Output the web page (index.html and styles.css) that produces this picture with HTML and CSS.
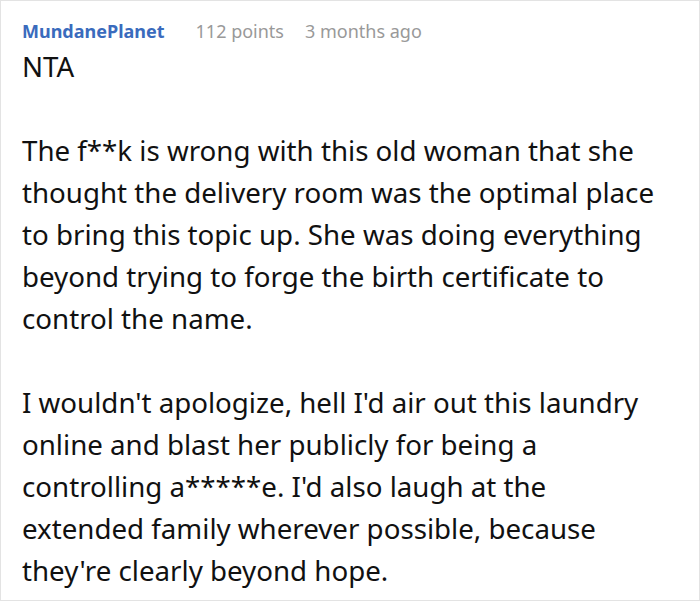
FILE: index.html
```html
<!DOCTYPE html>
<html>
<head>
<meta charset="utf-8">
<link rel="stylesheet" href="styles.css">
</head>
<body>
<div class="comment">
  <div class="meta">
    <span class="author">MundanePlanet</span>
    <span class="info">112 points</span>
    <span class="info">3 months ago</span>
  </div>
  <div class="text">NTA<br><br>The f**k is wrong with this old woman that she thought the delivery room was the optimal place to bring this topic up. She was doing everything beyond trying to forge the birth certificate to control the name.<br><br>I wouldn't apologize, hell I'd air out this laundry online and blast her publicly for being a controlling a*****e. I'd also laugh at the extended family wherever possible, because they're clearly beyond hope.</div>
</div>
</body>
</html>
```

FILE: styles.css
```css
html, body {
  margin: 0;
  padding: 0;
  background: #fff;
}
.comment {
  box-sizing: border-box;
  width: 700px;
  height: 601px;
  border: 1px solid #e3e3e3;
  padding: 18px 32px 0 21px;
  font-family: "Noto Sans", "Open Sans", sans-serif;
  overflow: hidden;
}
.meta {
  display: flex;
  gap: 21px;
  font-size: 18px;
  line-height: 24px;
}
.author {
  color: #3a6bbd;
  font-weight: 700;
  margin-right: 10px;
}
.info {
  color: #999;
}
.text {
  margin-top: 2px;
  font-size: 27.7px;
  line-height: 42px;
  color: #111;
}
```
